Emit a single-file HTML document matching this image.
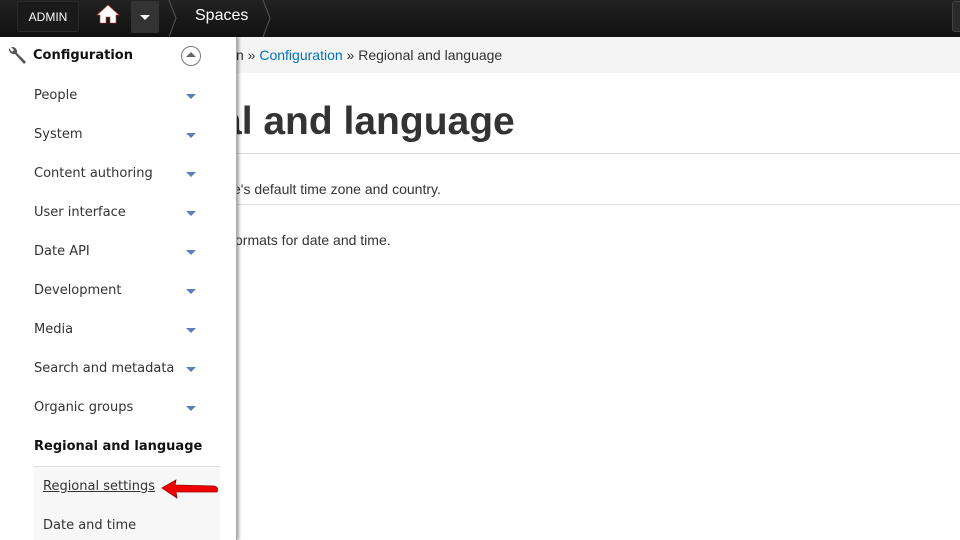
<!DOCTYPE html>
<html><head><style>
body{margin:0;width:960px;height:540px;overflow:hidden;background:#fff;font-family:"Liberation Sans",Arial,sans-serif;position:relative}
.top{position:absolute;left:0;top:0;width:960px;height:37px;background:linear-gradient(#222,#111)}
.admin{position:absolute;left:17px;top:1px;width:62px;height:31px;background:#1a1a1a;border-radius:3px;border:1px solid #2a2a2a;color:#fff;font-size:12px;line-height:31px;text-align:center;box-sizing:border-box}
.dd{position:absolute;left:131px;top:1px;width:28px;height:32px;background:#333;border-radius:2px}
.dd:after{content:"";position:absolute;left:9px;top:14px;border:5px solid transparent;border-top:5px solid #fff}
.sp{position:absolute;left:195px;top:7px;color:#fff;font-size:16px}
.chev{position:absolute;top:0;width:10px;height:37px}
.crumb{position:absolute;left:0;top:37px;width:960px;height:36px;background:#f4f4f4;font-size:14px;color:#333;line-height:36px}
.crumb span{position:absolute;left:236px}
.crumb a{color:#0074bd;text-decoration:none}
h1{position:absolute;left:220px;top:100px;margin:0;font-size:39px;font-weight:bold;color:#333}
.hr{position:absolute;left:236px;width:724px;height:1px;background:#ddd}
.t{position:absolute;left:233px;font-size:14px;color:#333}
.side{position:absolute;left:0;top:37px;width:236px;height:503px;background:#fff;box-shadow:2px 0 3px rgba(0,0,0,.35);border-right:1px solid #aaa;font-family:"DejaVu Sans",Verdana,sans-serif;overflow:hidden}
.it{position:absolute;left:34px;font-size:13px;color:#333}
.ar{position:absolute;left:186px;border:5px solid transparent;border-top:5px solid #5b7fb8;border-bottom:0}
.sub{position:absolute;left:34px;top:429px;width:186px;height:80px;background:#f7f7f7;border-top:1px solid #ddd}
</style></head><body>
<div class="top">
<div class="admin">ADMIN</div>
<svg style="position:absolute;left:96px;top:4px" width="24" height="20" viewBox="0 0 24 20"><path d="M12 1 L1 11 L4 11 L4 19 L10 19 L10 13 L14 13 L14 19 L20 19 L20 11 L23 11 Z" fill="#fff" stroke="#c33" stroke-width=".6"/></svg>
<div class="dd"></div>
<svg class="chev" style="left:168px" viewBox="0 0 10 37"><path d="M1 0 L8 18 L1 37" stroke="#555" fill="none"/></svg>
<div class="sp">Spaces</div>
<svg class="chev" style="left:262px" viewBox="0 0 10 37"><path d="M1 0 L8 18 L1 37" stroke="#555" fill="none"/></svg>
<div style="position:absolute;left:952px;top:1px;width:10px;height:29px;background:#2a2a2a;border-radius:3px;border:1px solid #444"></div>
</div>
<div class="crumb"><span>n » <a>Configuration</a> » Regional and language</span></div>
<h1>al and language</h1>
<div class="hr" style="top:153px"></div>
<div class="t" style="top:181px">e's default time zone and country.</div>
<div class="hr" style="top:204px"></div>
<div class="t" style="top:232px;left:235px">ormats for date and time.</div>
<div class="side">
<svg style="position:absolute;left:6px;top:8px" width="22" height="22" viewBox="0 0 22 22"><path d="M3 3 a5 5 0 0 0 6 6 L18 19 L20 17 L11 8 a5 5 0 0 0 -6 -6 L8 5 L6 7 Z" fill="#555"/></svg>
<div style="position:absolute;left:33px;top:11px;font-size:13px;font-weight:bold;color:#111">Configuration</div>
<div style="position:absolute;left:181px;top:9px;width:20px;height:20px;border:1px solid #777;border-radius:50%;box-sizing:border-box"></div>
<div style="position:absolute;left:186px;top:15px;border:5px solid transparent;border-bottom:5px solid #666;border-top:0"></div>
<div class="it" style="top:51px">People</div><div class="ar" style="top:57px"></div>
<div class="it" style="top:90px">System</div><div class="ar" style="top:96px"></div>
<div class="it" style="top:129px">Content authoring</div><div class="ar" style="top:135px"></div>
<div class="it" style="top:168px">User interface</div><div class="ar" style="top:174px"></div>
<div class="it" style="top:207px">Date API</div><div class="ar" style="top:213px"></div>
<div class="it" style="top:246px">Development</div><div class="ar" style="top:252px"></div>
<div class="it" style="top:285px">Media</div><div class="ar" style="top:291px"></div>
<div class="it" style="top:324px">Search and metadata</div><div class="ar" style="top:330px"></div>
<div class="it" style="top:363px">Organic groups</div><div class="ar" style="top:369px"></div>
<div class="it" style="top:402px;font-weight:bold;color:#111">Regional and language</div>
<div class="sub"></div>
<div class="it" style="left:43px;top:442px;text-decoration:underline">Regional settings</div>
<div class="it" style="left:43px;top:481px">Date and time</div>
<svg style="position:absolute;left:160px;top:441px" width="62" height="24" viewBox="0 0 62 24"><path d="M2 10 L16 2 L15 7 L54 8 Q59 9 57 14 L16 14 L17 20 Z" fill="#e00" stroke="#900" stroke-width=".8"/></svg>
</div>
</body></html>
